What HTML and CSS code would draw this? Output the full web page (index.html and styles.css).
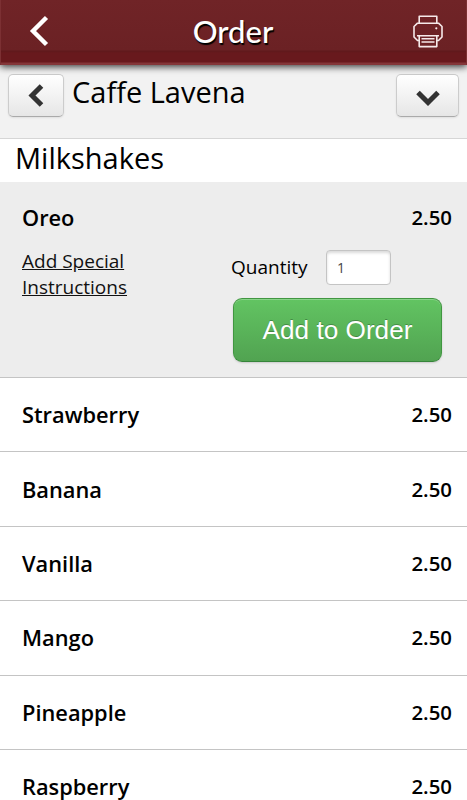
FILE: index.html
```html
<!DOCTYPE html>
<html lang="en">
<head>
    <meta charset="UTF-8">
    <meta name="viewport" content="width=device-width, initial-scale=1.0">
    <title>Order</title>
    <link rel="stylesheet" href="styles.css">
</head>
<body>
    <header class="topbar">
        <a href="#" class="back">
            <svg width="22" height="32" viewBox="0 0 22 32"><path d="M18.5 2.5 L5 16 L18.5 29.5" fill="none" stroke="#fff" stroke-width="4.4"/></svg>
        </a>
        <h1>Order</h1>
        <a href="#" class="print">
            <svg width="30" height="33" viewBox="0 0 30 33" fill="none" stroke="#f6e9e9" stroke-width="1.6" stroke-linejoin="round">
                <path d="M6.2 8.2 V1.3 H23.8 V8.2"/>
                <path d="M6.2 25.5 H4.5 L1 22 V11.5 L4.5 8.2 H25.5 L29 11.5 V22 L25.5 25.5 H23.8"/>
                <path d="M4 20.8 H26 M6.2 20.8 V31.6 H23.8 V20.8 M8.5 23.8 H21.5 M8.5 27 H21.5"/>
                <circle cx="23.3" cy="13.3" r="1.1" fill="#f6e9e9" stroke="none"/>
            </svg>
        </a>
    </header>

    <div class="venue">
        <button class="btn btn-back">
            <svg width="16" height="24" viewBox="0 0 16 24"><path d="M13.5 2 L4 11.5 L13.5 21" fill="none" stroke="#333" stroke-width="5"/></svg>
        </button>
        <h2>Caffe Lavena</h2>
        <button class="btn btn-menu">
            <svg width="24" height="17" viewBox="0 0 24 17"><path d="M2 2.5 L12 12.5 L22 2.5" fill="none" stroke="#333" stroke-width="5"/></svg>
        </button>
    </div>

    <h3 class="category">Milkshakes</h3>

    <div class="item open">
        <div class="line">
            <span>Oreo</span>
            <span class="price">2.50</span>
        </div>
        <div class="options">
            <a href="#" class="instructions">Add Special Instructions</a>
            <form class="order">
                <div class="qty">
                    <label for="qty">Quantity</label>
                    <input id="qty" type="text" value="1">
                </div>
                <button type="button" class="add">Add to Order</button>
            </form>
        </div>
    </div>

    <div class="item"><span>Strawberry</span><span class="price">2.50</span></div>
    <div class="item"><span>Banana</span><span class="price">2.50</span></div>
    <div class="item"><span>Vanilla</span><span class="price">2.50</span></div>
    <div class="item"><span>Mango</span><span class="price">2.50</span></div>
    <div class="item"><span>Pineapple</span><span class="price">2.50</span></div>
    <div class="item"><span>Raspberry</span><span class="price">2.50</span></div>
</body>
</html>
```
FILE: styles.css
```css
* {
    box-sizing: border-box;
}

body {
    font-family: "Open Sans", "Noto Sans", sans-serif;
    margin: 0;
    height: 800px;
    overflow: hidden;
    background-color: #fff;
    color: #000;
}

h1, h2, h3 {
    margin: 0;
    font-weight: 400;
}

svg {
    display: block;
}

/* top bar */
.topbar {
    position: relative;
    display: flex;
    justify-content: space-between;
    align-items: center;
    height: 65px;
    padding: 0 23px 3px 27px;
    background: linear-gradient(to bottom, #702427 0, #6b2124 50px, #5f191c 51px, #68191d 53px, #68191d 62px, #843639 63px);
    border-left: 1px solid #7c3033;
    border-right: 1px solid #7c3033;
    box-shadow: 0 2px 7px rgba(0, 0, 0, 0.75);
}

.topbar h1 {
    padding-left: 3px;
    font-family: Lato, sans-serif;
    font-weight: 500;
    font-size: 31px;
    line-height: 38px;
    margin-bottom: 1px;
    color: #fff;
    text-shadow: 1px 2px 1px #000;
}

/* venue bar */
.venue {
    display: flex;
    align-items: flex-start;
    height: 74px;
    padding: 9px 8px 0;
    background-color: #f2f2f2;
    border-bottom: 1px solid #d6d6d6;
}

.venue h2 {
    flex: 1;
    margin-left: 8px;
    font-size: 29px;
    line-height: 36px;
}

.btn {
    display: flex;
    justify-content: center;
    align-items: center;
    height: 43px;
    padding: 0;
    border: 1px solid #ccc;
    border-bottom-color: #aaa;
    border-radius: 5px;
    background: linear-gradient(to bottom, #fff, #e6e6e6);
    box-shadow: 0 1px 2px rgba(0, 0, 0, 0.08);
}

.btn-back {
    width: 56px;
}

.btn-menu {
    width: 63px;
    padding-top: 5px;
}

.category {
    height: 43px;
    padding-left: 15px;
    font-size: 29px;
    line-height: 37px;
}

/* menu items */
.item {
    display: flex;
    justify-content: space-between;
    align-items: center;
    height: 74.4px;
    padding: 0 15px 0 22px;
    border-bottom: 1px solid #c4c4c4;
    font-size: 21.8px;
    font-weight: 600;
}

.price {
    padding-bottom: 1px;
    font-size: 20.4px;
}

.item.open {
    display: block;
    height: 196px;
    padding-top: 21px;
    background-color: #ededed;
}

.line {
    display: flex;
    justify-content: space-between;
    height: 30px;
    line-height: 30px;
}

.open .price {
    line-height: 28px;
}

.options {
    display: flex;
    justify-content: space-between;
    margin-top: 15px;
    font-size: 19px;
    font-weight: 400;
}

.instructions {
    width: 130px;
    color: #111;
    line-height: 26px;
}

.order {
    width: 221px;
}

.qty {
    display: flex;
    align-items: center;
    height: 35px;
    margin-top: 2px;
}

.qty label {
    width: 95px;
    margin-bottom: 2px;
}

.qty input {
    width: 65px;
    height: 35px;
    padding: 0 10px;
    border: 1px solid #c4c4c4;
    border-radius: 4px;
    box-shadow: inset 0 2px 3px rgba(0, 0, 0, 0.15);
    font-family: "Open Sans", sans-serif;
    font-size: 14px;
    color: #444;
}

.add {
    display: block;
    width: 209px;
    height: 64px;
    margin: 13px 0 0 2px;
    padding: 0;
    border: 1px solid #419641;
    border-bottom-color: #36853a;
    border-radius: 9px;
    background: linear-gradient(to bottom, #62c462, #51a351);
    box-shadow: inset 0 1px 0 rgba(255, 255, 255, 0.25), 0 1px 2px rgba(0, 0, 0, 0.15);
    font-family: "Liberation Sans", Arial, sans-serif;
    font-size: 26.2px;
    color: #fff;
    text-shadow: 0 -1px 0 rgba(0, 0, 0, 0.25);
}
```
